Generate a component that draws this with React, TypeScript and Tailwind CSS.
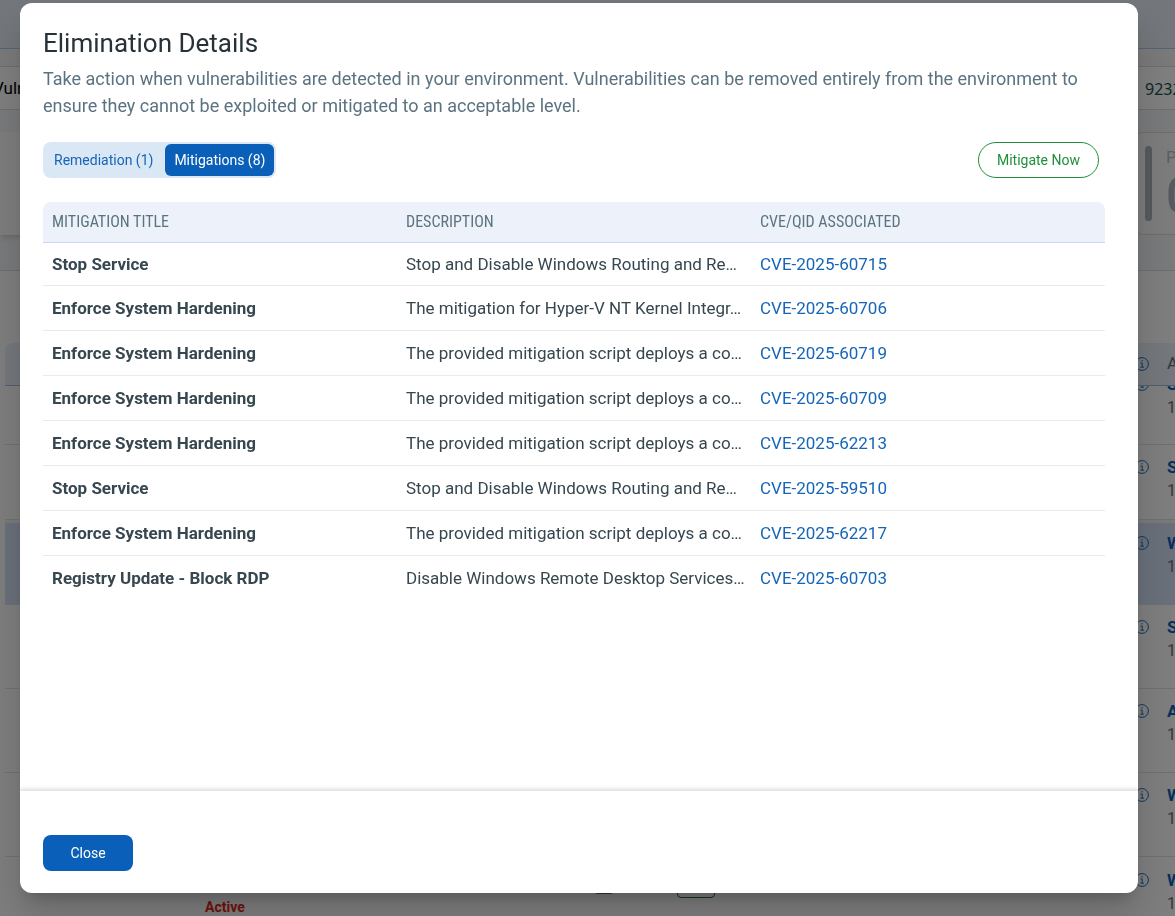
import { useState } from 'react';

type Mitigation = {
  title: string;
  description: string;
  cve: string;
};

const mitigations: Mitigation[] = [
  { title: 'Stop Service', description: 'Stop and Disable Windows Routing and Re…', cve: 'CVE-2025-60715' },
  { title: 'Enforce System Hardening', description: 'The mitigation for Hyper-V NT Kernel Integr…', cve: 'CVE-2025-60706' },
  { title: 'Enforce System Hardening', description: 'The provided mitigation script deploys a co…', cve: 'CVE-2025-60719' },
  { title: 'Enforce System Hardening', description: 'The provided mitigation script deploys a co…', cve: 'CVE-2025-60709' },
  { title: 'Enforce System Hardening', description: 'The provided mitigation script deploys a co…', cve: 'CVE-2025-62213' },
  { title: 'Stop Service', description: 'Stop and Disable Windows Routing and Re…', cve: 'CVE-2025-59510' },
  { title: 'Enforce System Hardening', description: 'The provided mitigation script deploys a co…', cve: 'CVE-2025-62217' },
  { title: 'Registry Update - Block RDP', description: 'Disable Windows Remote Desktop Services…', cve: 'CVE-2025-60703' },
];

const assets = [
  { initial: 'S', className: 'h-[75px] pt-[10px]' },
  { initial: 'W', className: 'h-[85px] pt-[8px] border-t-[3px] border-t-[#f4f4f4] bg-[#d4e1f5]' },
  { initial: 'S', className: 'h-[84px] pt-[10px]' },
  { initial: 'A', className: 'h-[84px] pt-[10px]' },
  { initial: 'W', className: 'h-[84px] pt-[10px]' },
];

function InfoIcon() {
  return (
    <svg className="h-[14px] w-[14px] shrink-0" viewBox="0 0 14 14" fill="none" stroke="#1d6cbd" aria-hidden="true">
      <circle cx="7" cy="7" r="6.4" />
      <path d="M5.5 6h1.7v4M5.3 10.2h3.6M6.4 3.8h1.4" />
    </svg>
  );
}

function AssetCell({ initial }: { initial: string }) {
  return (
    <div className="flex w-10 shrink-0 gap-[18px] overflow-hidden">
      <div className="flex h-6 items-center">
        <InfoIcon />
      </div>
      <div className="leading-6">
        <div className="text-[17px] font-bold text-[#0a5fb8]">{initial}</div>
        <div className="text-base text-[#5b7380]">1</div>
      </div>
    </div>
  );
}

/* Asset list that stays visible around the dialog */
function BackgroundPage() {
  return (
    <div className="flex h-screen flex-col overflow-hidden bg-[#f6f6f6]" aria-hidden="true">
      <div className="h-[49px] shrink-0 border-b border-[#a9c8e8] bg-[#e6edf4]" />
      <div className="h-[17px] shrink-0 bg-[#f4f4f4]" />
      <div className="flex h-[44px] shrink-0 items-center justify-between border-y border-[#d5dde3] bg-white pt-[2px]">
        <span className="-ml-[7px] text-[17px] text-black">Vuln</span>
        <span className="w-[30px] overflow-hidden font-['Noto_Sans',sans-serif] text-base text-[#12564b]">9232</span>
      </div>
      <div className="flex h-[161px] shrink-0 justify-between border-b border-[#d5dde3] bg-[#f2f4f6] pt-[22px]">
        <div className="h-[103px] w-10 bg-[#fbfbfb] shadow-md" />
        <div className="flex h-[103px] w-10 gap-[14px] overflow-hidden rounded-l-lg border-y border-l border-[#d5dde3] bg-[#f8f8f8] pt-[13px] pl-[9px]">
          <div className="h-[75px] w-[7px] shrink-0 rounded-full bg-[#aab5bf]" />
          <div>
            <div className="text-[17px] leading-[22px] text-[#b4bfc7]">P</div>
            <div className="text-[50px] leading-[56px] font-medium text-[#a7b4c0]">0</div>
          </div>
        </div>
      </div>
      <div className="flex grow flex-col bg-[#fcfcfc] pt-[72px] pl-[5px]">
        <div className="flex h-[43px] shrink-0 items-center justify-end rounded-tl-lg border-b border-[#9fbfdf] bg-[#e8eff8]">
          <div className="flex w-10 items-center gap-[18px] overflow-hidden text-[17px] text-[#5b7380]">
            <InfoIcon />
            <span>A</span>
          </div>
        </div>
        <div className="flex h-[59px] shrink-0 items-end justify-end overflow-hidden border-b border-[#dde3e6] pb-[24px]">
          <AssetCell initial="S" />
        </div>
        {assets.map((asset, i) => (
          <div key={i} className={`flex shrink-0 justify-end border-b border-[#dde3e6] ${asset.className}`}>
            <AssetCell initial={asset.initial} />
          </div>
        ))}
        <div className="flex grow justify-between pt-[11px]">
          <div className="flex pl-[200px]">
            <div className="w-[389px] pt-[29px] text-sm leading-5 font-bold text-[#e32417]">Active</div>
            <div className="h-[26px] w-5 rounded-sm bg-[#5c6670]" />
            <div className="ml-[63px] h-[30px] w-[38px] rounded-sm border border-[#2f6b33]" />
          </div>
          <AssetCell initial="W" />
        </div>
      </div>
    </div>
  );
}

function MitigationTable() {
  return (
    <table className="w-full table-fixed border-separate border-spacing-0 text-left text-[17px] leading-6">
      <thead>
        <tr className="h-[41px] font-['Roboto_Condensed',Roboto,sans-serif] text-base text-[#5b7380]">
          <th className="rounded-tl-lg border-b border-[#c5daee] bg-[#edf2fa] px-[9px] font-normal">MITIGATION TITLE</th>
          <th className="border-b border-[#c5daee] bg-[#edf2fa] px-[9px] font-normal">DESCRIPTION</th>
          <th className="rounded-tr-lg border-b border-[#c5daee] bg-[#edf2fa] px-[9px] font-normal">CVE/QID ASSOCIATED</th>
        </tr>
      </thead>
      <tbody className="[&_td]:border-b [&_td]:border-[#e6ecef] [&_tr:last-child_td]:border-0">
        {mitigations.map((item, i) => (
          <tr key={item.cve} className={i === 0 || i === mitigations.length - 1 ? 'h-[43px]' : 'h-[45px]'}>
            <td className="px-[9px] font-bold text-[#37474f]">{item.title}</td>
            <td className="px-[9px] whitespace-nowrap text-[#37474f]">{item.description}</td>
            <td className="px-[9px]">
              <a href="#" className="text-[#1565b8]">{item.cve}</a>
            </td>
          </tr>
        ))}
      </tbody>
    </table>
  );
}

export default function App() {
  const [tab, setTab] = useState('mitigations');

  const tabClass = (name: string) =>
    name === tab
      ? 'h-8 rounded-md bg-[#0a5fb8] px-[9px] text-white'
      : 'h-8 rounded-md px-[9px] text-[#1565b8]';

  return (
    <div className="font-['Roboto',sans-serif]">
      <BackgroundPage />

      <div className="fixed inset-0 flex bg-black/50 pt-[3px] pr-[37px] pb-[23px] pl-5">
        <div
          role="dialog"
          aria-labelledby="dialog-title"
          className="flex grow flex-col overflow-hidden rounded-xl bg-white shadow-[0_11px_15px_-7px_rgba(0,0,0,0.2),0_24px_38px_3px_rgba(0,0,0,0.14)]"
        >
          <div className="grow pt-6 pr-[33px] pl-[23px]">
            <h1 id="dialog-title" className="text-[26px] leading-8 text-[#263238]">Elimination Details</h1>
            <p className="mt-[6px] text-lg leading-[27px] text-[#5b7380]">
              Take action when vulnerabilities are detected in your environment. Vulnerabilities can be removed entirely from the
              environment to ensure they cannot be exploited or mitigated to an acceptable level.
            </p>

            <div className="mt-[23px] mr-[6px] flex items-center justify-between">
              <div role="tablist" className="flex gap-[3px] rounded-lg bg-[#dae7f4] p-[2px] text-sm">
                <button role="tab" aria-selected={tab === 'remediation'} className={tabClass('remediation')} onClick={() => setTab('remediation')}>
                  Remediation (1)
                </button>
                <button role="tab" aria-selected={tab === 'mitigations'} className={tabClass('mitigations')} onClick={() => setTab('mitigations')}>
                  Mitigations (8)
                </button>
              </div>
              <button className="h-9 rounded-full border border-[#1f8f3a] px-[18px] text-sm text-[#1f8f3a]">
                Mitigate Now
              </button>
            </div>

            <div className="mt-6">
              <MitigationTable />
            </div>
          </div>

          <div className="border-t border-[#e6e6e6] px-[23px] pt-[44px] pb-[22px] shadow-[0_-1px_4px_rgba(0,0,0,0.15)]">
            <button className="h-9 w-[90px] rounded-lg bg-[#0a5fb8] text-sm text-white">Close</button>
          </div>
        </div>
      </div>
    </div>
  );
}
